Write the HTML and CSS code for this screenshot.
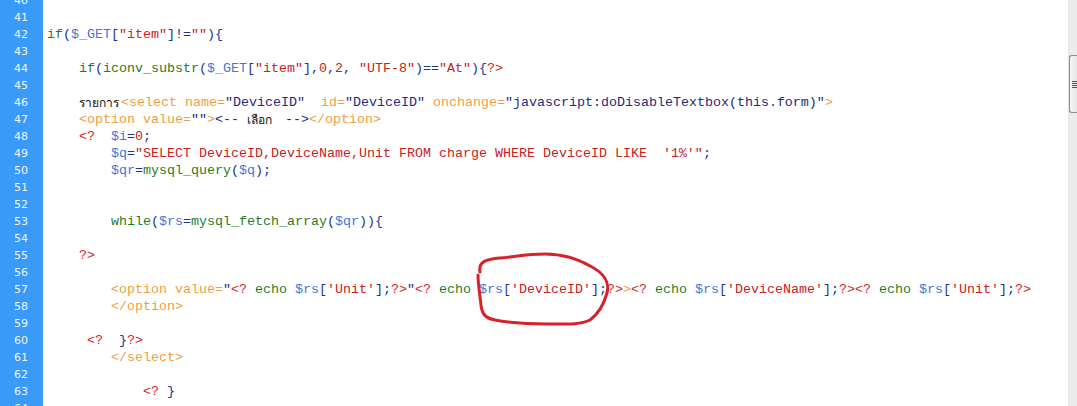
FILE: index.html
```html
<!DOCTYPE html>
<html lang="th">

<head>
    <meta charset="UTF-8">
    <meta name="viewport" content="width=device-width, initial-scale=1.0">
    <title>Editor</title>
    <link rel="stylesheet" href="styles.css">
</head>

<body>
    <div class="editor">
        <div class="code">
            <div class="line"><span class="num">40</span><span class="src"></span></div>
            <div class="line"><span class="num">41</span><span class="src"></span></div>
            <div class="line"><span class="num">42</span><span class="src"><span class="k">if</span><span class="p">(</span><span class="v">$_GET</span><span class="p">[</span><span class="s">"item"</span><span class="p">]!=</span><span class="s">""</span><span class="p">){</span></span></div>
            <div class="line"><span class="num">43</span><span class="src"></span></div>
            <div class="line"><span class="num">44</span><span class="src">    <span class="k">if</span><span class="p">(</span><span class="k">iconv_substr</span><span class="p">(</span><span class="v">$_GET</span><span class="p">[</span><span class="s">"item"</span><span class="p">],</span><span class="s">0</span><span class="p">,</span><span class="s">2</span><span class="p">, </span><span class="s">"UTF-8"</span><span class="p">)==</span><span class="s">"At"</span><span class="p">){</span><span class="ph">?&gt;</span></span></div>
            <div class="line"><span class="num">45</span><span class="src"></span></div>
            <div class="line"><span class="num">46</span><span class="src">    <span class="thai w-42">รายการ</span><span class="t">&lt;select name=</span><span class="a">"DeviceID"</span><span class="t">  id=</span><span class="a">"DeviceID"</span><span class="t"> onchange=</span><span class="a">"javascript:doDisableTextbox(this.form)"</span><span class="t">&gt;</span></span></div>
            <div class="line"><span class="num">47</span><span class="src">    <span class="t">&lt;option value=</span><span class="a">""</span><span class="t">&gt;</span><span class="a">&lt;-- </span><span class="thai w-30">เลือก</span><span class="a"> --&gt;</span><span class="t">&lt;/option&gt;</span></span></div>
            <div class="line"><span class="num">48</span><span class="src">    <span class="ph">&lt;?</span>  <span class="v">$i</span><span class="p">=</span><span class="s">0</span><span class="p">;</span></span></div>
            <div class="line"><span class="num">49</span><span class="src">        <span class="v">$q</span><span class="p">=</span><span class="s">"SELECT DeviceID,DeviceName,Unit FROM charge WHERE DeviceID LIKE  '1%'"</span><span class="p">;</span></span></div>
            <div class="line"><span class="num">50</span><span class="src">        <span class="v">$qr</span><span class="p">=</span><span class="k">mysql_query</span><span class="p">(</span><span class="v">$q</span><span class="p">);</span></span></div>
            <div class="line"><span class="num">51</span><span class="src"></span></div>
            <div class="line"><span class="num">52</span><span class="src"></span></div>
            <div class="line"><span class="num">53</span><span class="src">        <span class="k">while</span><span class="p">(</span><span class="v">$rs</span><span class="p">=</span><span class="k">mysql_fetch_array</span><span class="p">(</span><span class="v">$qr</span><span class="p">)){</span></span></div>
            <div class="line"><span class="num">54</span><span class="src"></span></div>
            <div class="line"><span class="num">55</span><span class="src">    <span class="ph">?&gt;</span></span></div>
            <div class="line"><span class="num">56</span><span class="src"></span></div>
            <div class="line"><span class="num">57</span><span class="src">        <span class="t">&lt;option value=</span><span class="a">"</span><span class="ph">&lt;?</span> <span class="k">echo</span> <span class="v">$rs</span><span class="p">[</span><span class="s">'Unit'</span><span class="p">];</span><span class="ph">?&gt;</span><span class="a">"</span><span class="ph">&lt;?</span> <span class="k">echo</span> <span class="v">$rs</span><span class="p">[</span><span class="s">'DeviceID'</span><span class="p">];</span><span class="ph">?&gt;</span><span class="t">&gt;</span><span class="ph">&lt;?</span> <span class="k">echo</span> <span class="v">$rs</span><span class="p">[</span><span class="s">'DeviceName'</span><span class="p">];</span><span class="ph">?&gt;&lt;?</span> <span class="k">echo</span> <span class="v">$rs</span><span class="p">[</span><span class="s">'Unit'</span><span class="p">];</span><span class="ph">?&gt;</span></span></div>
            <div class="line"><span class="num">58</span><span class="src">        <span class="t">&lt;/option&gt;</span></span></div>
            <div class="line"><span class="num">59</span><span class="src"></span></div>
            <div class="line"><span class="num">60</span><span class="src">     <span class="ph">&lt;?</span>  <span class="p">}</span><span class="ph">?&gt;</span></span></div>
            <div class="line"><span class="num">61</span><span class="src">        <span class="t">&lt;/select&gt;</span></span></div>
            <div class="line"><span class="num">62</span><span class="src"></span></div>
            <div class="line"><span class="num">63</span><span class="src">            <span class="ph">&lt;?</span> <span class="p">}</span></span></div>
            <div class="line"><span class="num">64</span><span class="src"></span></div>
        </div>

        <div class="scrollbar">
            <div class="thumb">
                <span class="grip"></span>
            </div>
        </div>
    </div>

    <!-- hand drawn mark -->
    <svg class="mark" width="1077" height="406" viewBox="0 0 1077 406">
        <path d="M480 272 C478 262 486 259 500 258 C515 257 525 254 545 254 C565 254 580 260 592 267 C603 273 610 282 607 293 C604 304 598 314 590 320 C580 325 565 324 548 324 C530 324 510 323 495 320 C485 318 482 314 481 305 C480 295 478 285 478 275"
              fill="none" stroke="#d8222b" stroke-width="3" stroke-linecap="round" stroke-linejoin="round" />
    </svg>
</body>

</html>
```

FILE: styles.css
```css
:root {
    --ff-code: 'Liberation Mono', 'Courier New', monospace;
    --clr-gutter: #3a9af8;
    --clr-green: #1f7d1f;
    --clr-var: #3f78d8;
    --clr-punct: #22318f;
    --clr-str: #c62222;
    --clr-php: #d81e1e;
    --clr-tag: #eda043;
    --clr-attr: #1c2a82;
}

* {
    margin: 0;
    padding: 0;
    box-sizing: border-box;
}

html,
body {
    height: 100%;
}

body {
    background: #fff;
    overflow: hidden;
    position: relative;
}

.editor {
    display: flex;
    height: 100%;
}

.code {
    flex: 1;
    margin-top: -8px;
    font-family: var(--ff-code);
    font-size: 13.33px;
    line-height: 17px;
    color: var(--clr-punct);
}

.line {
    display: grid;
    grid-template-columns: 43px 1fr;
    height: 17px;
}

.num {
    background: var(--clr-gutter);
    color: #eef5ff;
    font-family: 'DejaVu Sans', sans-serif;
    font-size: 11px;
    padding-left: 14px;
}

.src {
    white-space: pre;
    padding-left: 4px;
}

.k {
    color: var(--clr-green);
}

.v {
    color: var(--clr-var);
}

.p {
    color: var(--clr-punct);
}

.s {
    color: var(--clr-str);
}

.ph {
    color: var(--clr-php);
}

.t {
    color: var(--clr-tag);
}

.a {
    color: var(--clr-attr);
}

.thai {
    display: inline-block;
    color: #111;
    font-family: 'Noto Sans', 'DejaVu Sans', sans-serif;
    font-size: 12px;
    vertical-align: top;
}

.w-42 {
    width: 42px;
}

.w-30 {
    width: 30px;
}

.scrollbar {
    width: 9px;
    background: #ececec;
    border-left: 1px solid #e4e4e4;
    padding-top: 55px;
}

.thumb {
    height: 58px;
    background: linear-gradient(90deg, #f6f6f6, #e6e6e6);
    border: 1px solid #8c8c8c;
    border-right: 0;
    border-radius: 3px 0 0 3px;
    display: flex;
    align-items: center;
    padding-left: 2px;
}

.grip {
    display: block;
    width: 6px;
    height: 7px;
    background: repeating-linear-gradient(#555 0 1px, transparent 1px 2px);
}

.mark {
    position: absolute;
    top: 0;
    left: 0;
    pointer-events: none;
}
```
